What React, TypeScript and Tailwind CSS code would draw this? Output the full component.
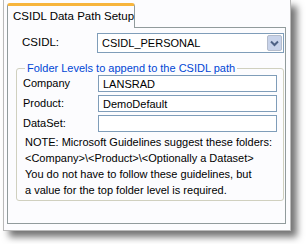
import React from 'react';

const inputCls =
  'h-[17px] w-[179px] border border-[#7f9db9] bg-white px-[4px] text-[11px] leading-[15px] text-black outline-none';

function Row({ label, value }: { label: string; value: string }) {
  return (
    <div className="flex h-[17px] items-center">
      <span className="w-[75px] text-[11px]">{label}</span>
      <input className={inputCls} defaultValue={value} />
    </div>
  );
}

export default function App() {
  return (
    <div className="h-[244px] w-[306px] overflow-hidden bg-white font-['Liberation_Sans',Arial,sans-serif] text-black">
      <div className="ml-[3px] h-[231px] w-[288px] border-x border-b border-[#b9b9b9] bg-[#fcfcfe] pl-[3px] pt-[3px] shadow-[6px_6px_7px_rgba(0,0,0,0.55)]">
        {/* tab */}
        <div className="relative z-10 -mb-px flex h-[25px] w-[128px] items-center whitespace-nowrap rounded-t-[3px] border-x border-t-[3px] border-[#919b9c] border-t-[#f7b53c] bg-[#fcfcfe] pl-[5px] text-[11.5px]">
          CSIDL Data Path Setup
        </div>

        {/* panel */}
        <div className="h-[197px] w-[279px] border border-[#919b9c] bg-[#fcfcfe] pl-[8px] pt-[5px]">
          <div className="flex h-[20px] items-center">
            <span className="w-[81px] pl-[6px] text-[11.5px]">CSIDL:</span>
            <div className="flex h-[20px] w-[187px] items-center border border-[#7f9db9] bg-white pl-[4px] pr-[1px]">
              <span className="flex-1 text-[11px]">CSIDL_PERSONAL</span>
              <div className="flex h-[16px] w-[15px] items-center justify-center rounded-[2px] border border-[#b4bccc] bg-[#c8d3ea]">
                <svg width="9" height="7" viewBox="0 0 9 7">
                  <path d="M1 1.5 L4.5 5 L8 1.5" fill="none" stroke="#4d6185" strokeWidth="2" />
                </svg>
              </div>
            </div>
          </div>

          <fieldset className="mt-[8px] h-[140px] w-[268px] rounded-[3px] border border-[#d0d0bf] pl-[6px] pr-[6px]">
            <legend className="ml-[2px] px-[2px] text-[11px] leading-[14px] text-[#0046d5]">
              Folder Levels to append to the CSIDL path
            </legend>
            <div className="flex flex-col gap-[3px]">
              <Row label="Company" value="LANSRAD" />
              <Row label="Product:" value="DemoDefault" />
              <Row label="DataSet:" value="" />
            </div>
            <div className="mt-[2px] pl-[2px] text-[11px] leading-[16px]">
              <div>NOTE: Microsoft Guidelines suggest these folders:</div>
              <div>&lt;Company&gt;\&lt;Product&gt;\&lt;Optionally a Dataset&gt;</div>
              <div>You do not have to follow these guidelines, but</div>
              <div>a value for the top folder level is required.</div>
            </div>
          </fieldset>
        </div>
      </div>
    </div>
  );
}
